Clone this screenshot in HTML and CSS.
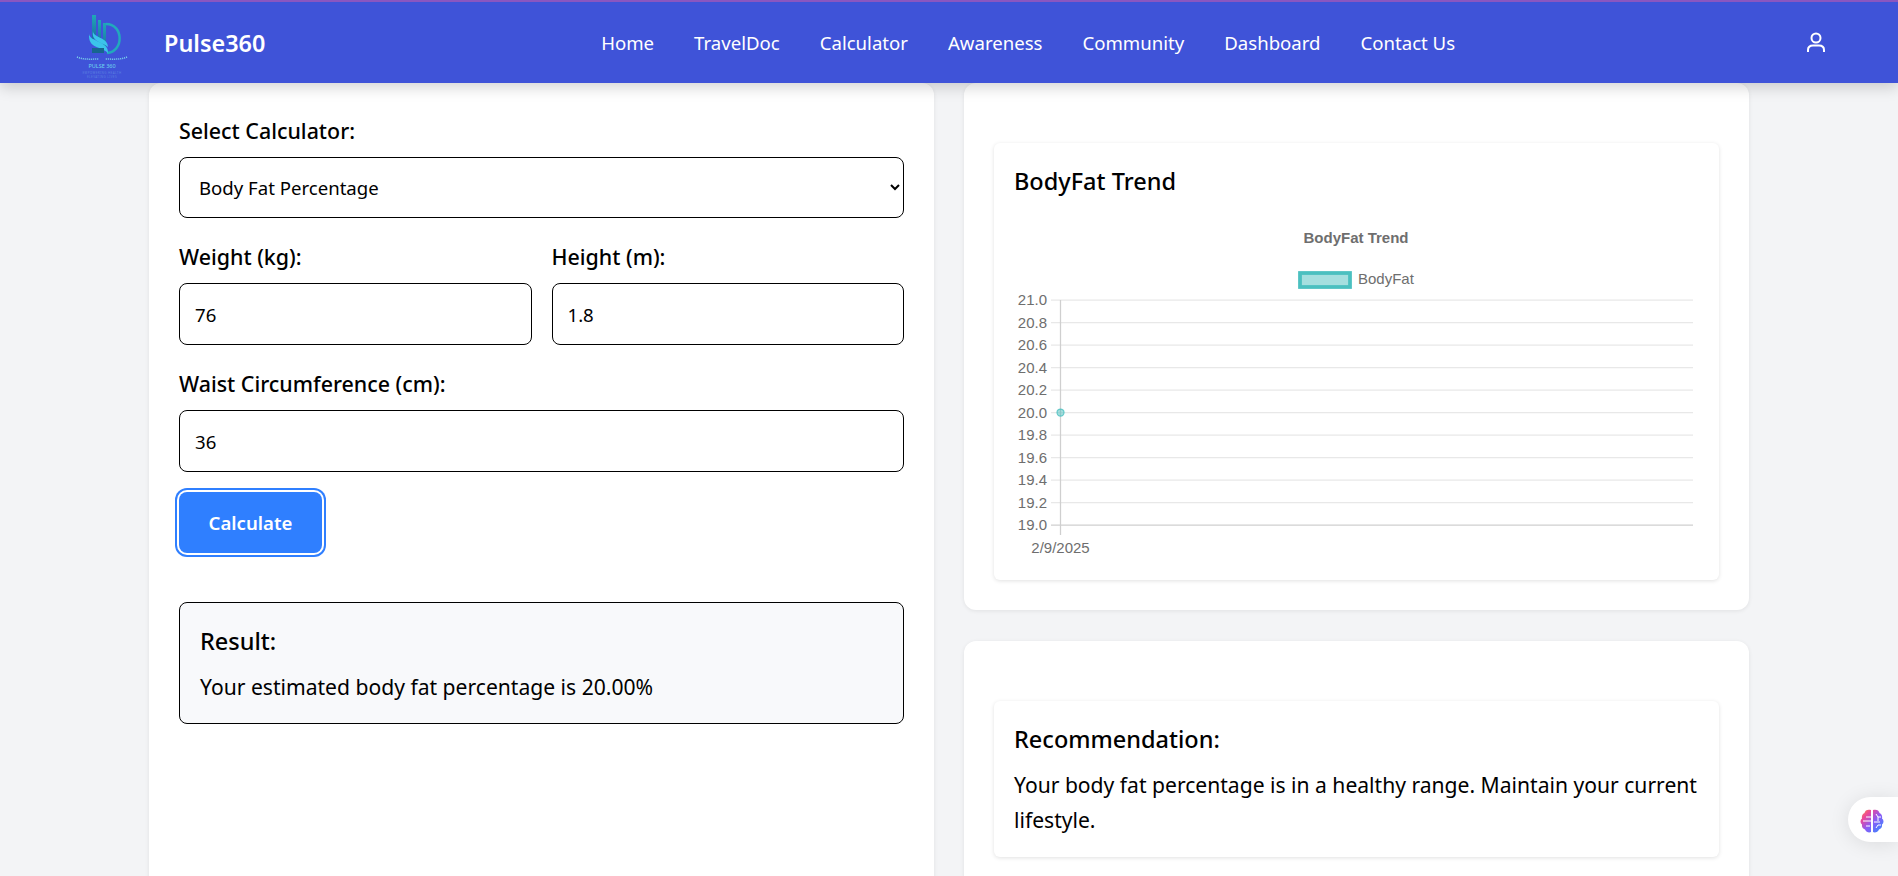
FILE: index.html
```html
<!DOCTYPE html>
<html lang="en">
  <head>
    <meta charset="UTF-8" />
    <meta name="viewport" content="width=device-width, initial-scale=1.0" />
    <title>Pulse360 Calculator</title>
    <link rel="stylesheet" href="styles.css">
  </head>
  <body>
    <header class="navbar">
      <div class="brand">
        <svg class="brand-logo" viewBox="0 0 52 64" width="52" height="64">
          <defs>
            <linearGradient id="logoBars" x1="0" y1="0" x2="0" y2="1">
              <stop offset="0" stop-color="#1fa8b8" />
              <stop offset="1" stop-color="#1a6fa0" />
            </linearGradient>
          </defs>
          <rect x="16" y="0" width="4" height="24" fill="url(#logoBars)" />
          <rect x="22" y="5" width="3" height="24" fill="url(#logoBars)" />
          <rect x="27" y="8" width="3" height="26" fill="url(#logoBars)" />
          <path d="M30 9 C48 9 48 37 31 38" fill="none" stroke="#22a9bd" stroke-width="2.5" />
          <path d="M13 19 C14 27 33 26 32 38 C25 31 12 34 13 19 Z" fill="#3bc4ea" />
          <path d="M17 16 C17 23 32 22 32 32 C26 27 15 27 17 16 Z" fill="#3bc4ea" />
          <rect x="16" y="33" width="12" height="5" fill="#17658f" />
          <path d="M1 42 C8 45 16 44 23 44 M51 42 C44 45 36 44 29 44" fill="none" stroke="#7fdcec" stroke-width="1.5" stroke-dasharray="1 1" />
          <text class="logo-name" x="26" y="53" text-anchor="middle">PULSE 360</text>
          <text class="logo-tag" x="26" y="59" text-anchor="middle">EMPOWERING HEALTH</text>
          <text class="logo-tag" x="26" y="63" text-anchor="middle">ELEVATING LIVES</text>
        </svg>
        <span class="brand-name">Pulse360</span>
      </div>
      <nav class="nav-links">
        <a href="#">Home</a>
        <a href="#">TravelDoc</a>
        <a href="#">Calculator</a>
        <a href="#">Awareness</a>
        <a href="#">Community</a>
        <a href="#">Dashboard</a>
        <a href="#">Contact Us</a>
      </nav>
      <svg class="user-icon" viewBox="0 0 20 24" width="20" height="24" fill="none" stroke="#fff" stroke-width="2">
        <circle cx="10" cy="7" r="4.5" />
        <path d="M2 21 V19 C2 16 4 14.500 7 14.500 H13 C16 14.500 18 16 18 19 V21" />
      </svg>
    </header>

    <main class="container">
      <section class="card calc-card">
        <label class="field-label" for="calc-type">Select Calculator:</label>
        <select class="field select-field" id="calc-type">
          <option>Body Fat Percentage</option>
          <option>BMI</option>
        </select>

        <div class="field-row">
          <div>
            <label class="field-label" for="weight">Weight (kg):</label>
            <input class="field" id="weight" type="text" value="76" />
          </div>
          <div>
            <label class="field-label" for="height">Height (m):</label>
            <input class="field" id="height" type="text" value="1.8" />
          </div>
        </div>

        <label class="field-label" for="waist">Waist Circumference (cm):</label>
        <input class="field" id="waist" type="text" value="36" />

        <button class="calc-btn">Calculate</button>

        <div class="result-box">
          <h3>Result:</h3>
          <p>Your estimated body fat percentage is 20.00%</p>
        </div>
      </section>

      <div class="side-col">
        <section class="card">
          <div class="inner-card chart-card">
            <h3>BodyFat Trend</h3>
            <svg class="chart" viewBox="0 0 725 360" width="725" height="360">
              <text class="chart-title" x="362" y="34" text-anchor="middle">BodyFat Trend</text>
              <rect class="legend-box" x="306" y="64" width="50" height="14" />
              <text class="chart-text" x="364" y="75">BodyFat</text>

              <g class="grid">
                <line x1="57" x2="699" y1="91" y2="91" />
                <line x1="57" x2="699" y1="113.500" y2="113.500" />
                <line x1="57" x2="699" y1="136" y2="136" />
                <line x1="57" x2="699" y1="158.500" y2="158.500" />
                <line x1="57" x2="699" y1="181" y2="181" />
                <line x1="57" x2="699" y1="203.500" y2="203.500" />
                <line x1="57" x2="699" y1="226" y2="226" />
                <line x1="57" x2="699" y1="248.500" y2="248.500" />
                <line x1="57" x2="699" y1="271" y2="271" />
                <line x1="57" x2="699" y1="293.500" y2="293.500" />
              </g>
              <g class="axis">
                <line x1="57" x2="699" y1="316" y2="316" />
                <line x1="66.500" x2="66.500" y1="91" y2="326" />
              </g>
              <g class="chart-text tick-labels" text-anchor="end">
                <text x="53" y="96">21.0</text>
                <text x="53" y="118.500">20.8</text>
                <text x="53" y="141">20.6</text>
                <text x="53" y="163.500">20.4</text>
                <text x="53" y="186">20.2</text>
                <text x="53" y="208.500">20.0</text>
                <text x="53" y="231">19.8</text>
                <text x="53" y="253.500">19.6</text>
                <text x="53" y="276">19.4</text>
                <text x="53" y="298.500">19.2</text>
                <text x="53" y="321">19.0</text>
              </g>
              <text class="chart-text" x="66.500" y="344" text-anchor="middle">2/9/2025</text>
              <circle class="chart-point" cx="66.500" cy="203.500" r="3.500" />
            </svg>
          </div>
        </section>

        <section class="card">
          <div class="inner-card">
            <h3>Recommendation:</h3>
            <p>Your body fat percentage is in a healthy range. Maintain your current lifestyle.</p>
          </div>
        </section>
      </div>
    </main>

    <div class="brain-tab">
      <svg viewBox="0 0 26 26" width="26" height="26">
        <defs>
          <linearGradient id="brainFill" x1="0" y1="0" x2="1" y2="1">
            <stop offset="0" stop-color="#fb923c" />
            <stop offset="0.25" stop-color="#ec4899" />
            <stop offset="0.55" stop-color="#8b5cf6" />
            <stop offset="1" stop-color="#2f8cff" />
          </linearGradient>
        </defs>
        <path fill="url(#brainFill)" d="M12 2 C9 1 6 2 5.500 5 C3 6 2.500 9 3 10.500 C1 12 1 15 3 16.500 C2.500 19 4 21 6 21.500 C7 24 10 25 12 24 Z M14 2 C17 1 20 2 20.500 5 C23 6 23.500 9 23 10.500 C25 12 25 15 23 16.500 C23.500 19 22 21 20 21.500 C19 24 16 25 14 24 Z" />
        <path fill="none" stroke="#fff" stroke-width="1" d="M7 9 H12 M4 13 H12 M7 18 H11 M17 6 L19 9 L22 9 M19 9 V13 M15 14 H21 M17 20 L19 17 H22" />
      </svg>
    </div>
  </body>
</html>
```

FILE: styles.css
```css
* {
  margin: 0;
  padding: 0;
  box-sizing: border-box;
  font-family: "Noto Sans", "Open Sans", sans-serif;
}

html,
body {
  height: 100%;
  overflow: hidden;
}

body {
  background-color: #f3f4f6;
  color: #000;
}

.navbar {
  position: relative;
  z-index: 10;
  height: 83px;
  padding: 0 72px 0 76px;
  display: flex;
  align-items: center;
  justify-content: space-between;
  background-color: #3f53d8;
  border-top: 2px solid #8a56c0;
  box-shadow: 0 4px 14px rgba(0, 0, 0, 0.18);
}

.brand {
  display: flex;
  align-items: center;
  gap: 36px;
}

.brand-logo {
  display: block;
  margin-top: 8px;
  overflow: visible;
}

.logo-name {
  font-size: 5.500px;
  fill: #6fd8ee;
}

.logo-tag {
  font-size: 3px;
  letter-spacing: 0.4px;
  fill: #5a7fe0;
}

.brand-name {
  font-size: 23.400px;
  font-weight: 600;
  color: #fff;
}

.nav-links {
  display: flex;
  gap: 40px;
  margin-right: 15px;
}

.nav-links a {
  font-size: 18.600px;
  font-weight: 400;
  color: #fff;
  text-decoration: none;
}

.user-icon {
  display: block;
}

.container {
  width: 1600px;
  margin: 0 auto;
  display: grid;
  grid-template-columns: 785px 785px;
  gap: 30px;
  align-items: stretch;
}

.card {
  padding: 30px;
  background: #fff;
  border-radius: 12px;
  box-shadow: 0 1px 4px rgba(0, 0, 0, 0.08);
}

.calc-card {
  min-height: 900px;
  padding-top: 29px;
}

.side-col {
  display: flex;
  flex-direction: column;
  gap: 31px;
}

.field-label {
  display: block;
  margin-bottom: 8px;
  font-size: 21.400px;
  font-weight: 500;
  line-height: 37px;
}

.field {
  display: block;
  width: 100%;
  height: 62px;
  margin-bottom: 20px;
  padding: 0 15px;
  font-size: 18.600px;
  color: #000;
  background: #fff;
  border: 1px solid #000;
  border-radius: 8px;
}

.select-field {
  height: 61px;
}

.field-row {
  display: grid;
  grid-template-columns: 1fr 1fr;
  gap: 20px;
}

.calc-btn {
  display: block;
  width: 143px;
  height: 61px;
  font-size: 18.600px;
  font-weight: 600;
  color: #fff;
  background-color: #2f7fff;
  border: none;
  border-radius: 8px;
  box-shadow: 0 0 0 2px #fff, 0 0 0 4px #2f7fff;
}

.result-box {
  margin-top: 49px;
  height: 122px;
  padding: 20px;
  background-color: #f8f9fb;
  border: 1px solid #000;
  border-radius: 8px;
}

.result-box h3,
.inner-card h3 {
  font-size: 23.500px;
  font-weight: 500;
  line-height: 36px;
  margin-bottom: 10px;
}

.result-box p,
.inner-card p {
  font-size: 21.100px;
  line-height: 35px;
}

.inner-card {
  margin-top: 30px;
  padding: 20px;
  background: #fff;
  border-radius: 6px;
  box-shadow: 0 1px 4px rgba(0, 0, 0, 0.12);
}

.chart-card {
  height: 437px;
  padding-bottom: 0;
}

.chart {
  display: block;
  margin: 0 -20px;
  overflow: visible;
}

.chart-title {
  font-family: "Liberation Sans", sans-serif;
  font-size: 15px;
  font-weight: 700;
  fill: #6e6e6e;
}

.chart-text,
.chart-text text {
  font-family: "Liberation Sans", sans-serif;
  font-size: 15px;
  fill: #6e6e6e;
}

.legend-box {
  fill: rgba(75, 192, 192, 0.5);
  stroke: #4bc0c0;
  stroke-width: 3.750;
}

.grid line {
  stroke: #e8e8e8;
  stroke-width: 1.250;
}

.axis line {
  stroke: #cfcfcf;
  stroke-width: 1.250;
}

.chart-point {
  fill: rgba(75, 192, 192, 0.5);
  stroke: rgba(75, 192, 192, 0.8);
  stroke-width: 1.250;
}

.brain-tab {
  position: fixed;
  right: 0;
  top: 797px;
  width: 50px;
  height: 45px;
  padding: 11px 0 0 11px;
  background: #fff;
  border-radius: 23px 0 0 23px;
  box-shadow: 0 2px 20px rgba(0, 0, 0, 0.1);
}
```
